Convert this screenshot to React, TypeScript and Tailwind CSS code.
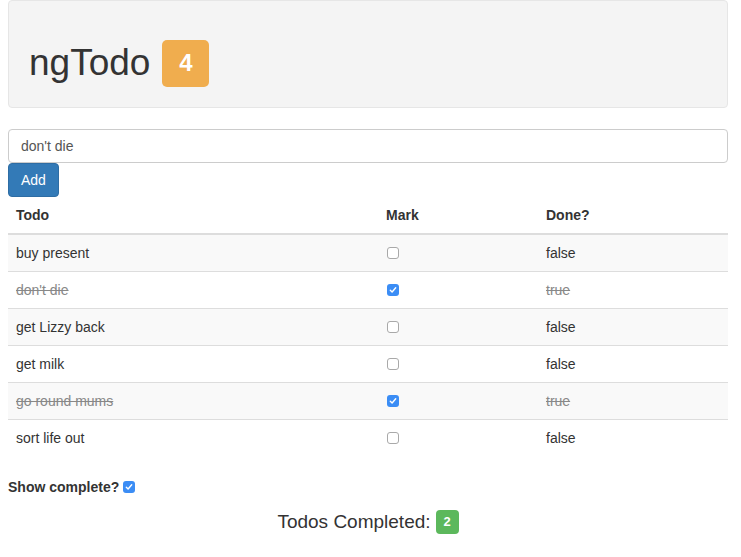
const todos = [
  { text: "buy present", done: false },
  { text: "don't die", done: true },
  { text: "get Lizzy back", done: false },
  { text: "get milk", done: false },
  { text: "go round mums", done: true },
  { text: "sort life out", done: false },
];

function Check({ on }: { on: boolean }) {
  if (on) {
    return (
      <span className="inline-flex w-[12px] h-[12px] rounded-[3px] bg-[#3b8df5] items-center justify-center">
        <svg width="8" height="8" viewBox="0 0 8 8">
          <path d="M1.3 4.2 L3.1 6 L6.7 1.8" fill="none" stroke="#fff" strokeWidth="1.4" strokeLinecap="round" strokeLinejoin="round" />
        </svg>
      </span>
    );
  }
  return <span className="inline-block w-[12px] h-[12px] rounded-[3px] border border-[#a9a9a9] bg-white" />;
}

export default function App() {
  const done = todos.filter((t) => t.done).length;
  return (
    <div className="min-h-screen bg-white text-[#333] font-['Liberation_Sans',Arial,sans-serif] text-[14px] leading-[20px]">
      <div className="ml-2 w-[720px]">
        <div className="h-[108px] border border-[#e6e6e6] rounded-[4px] bg-[#f4f4f4] flex items-center pl-[20px] pt-[18px]">
          <h1 className="text-[37px] leading-[40px] font-normal text-[#333]">ngTodo</h1>
          <span className="ml-[12px] w-[47px] h-[47px] rounded-[5px] bg-[#f0ad4e] text-white font-bold text-[24px] flex items-center justify-center">
            {todos.length - done}
          </span>
        </div>

        <div className="mt-[21px] h-[34px] border border-[#ccc] rounded-[4px] flex items-center px-[12px] text-[#555]">
          don't die
        </div>
        <button className="h-[34px] px-[12px] bg-[#337ab7] border border-[#2e6da4] rounded-[4px] text-white">Add</button>

        <table className="w-full border-collapse">
          <thead>
            <tr className="border-b-2 border-[#ddd]">
              <th className="w-[370px] text-left font-bold p-[8px]">Todo</th>
              <th className="w-[160px] text-left font-bold p-[8px]">Mark</th>
              <th className="text-left font-bold p-[8px]">Done?</th>
            </tr>
          </thead>
          <tbody>
            {todos.map((t, i) => (
              <tr key={t.text} className={(i % 2 === 0 ? "bg-[#f9f9f9] " : "") + (i > 0 ? "border-t border-[#ddd]" : "")}>
                <td className={"p-[8px] " + (t.done ? "line-through text-[#888]" : "")}>{t.text}</td>
                <td className="p-[8px] pl-[9px] align-middle">
                  <span className="flex items-center h-[20px]">
                    <Check on={t.done} />
                  </span>
                </td>
                <td className={"p-[8px] " + (t.done ? "line-through text-[#888]" : "")}>{t.done ? "true" : "false"}</td>
              </tr>
            ))}
          </tbody>
        </table>

        <div className="mt-[21px] flex items-center font-bold">
          Show complete?
          <span className="ml-[4px] flex items-center">
            <Check on={true} />
          </span>
        </div>

        <div className="mt-[13px] flex items-center justify-center text-[19px] leading-[24px]">
          Todos Completed:
          <span className="ml-[5px] w-[23px] h-[24px] rounded-[4px] bg-[#5cb85c] text-white font-bold text-[13px] flex items-center justify-center">
            {done}
          </span>
        </div>
      </div>
    </div>
  );
}
